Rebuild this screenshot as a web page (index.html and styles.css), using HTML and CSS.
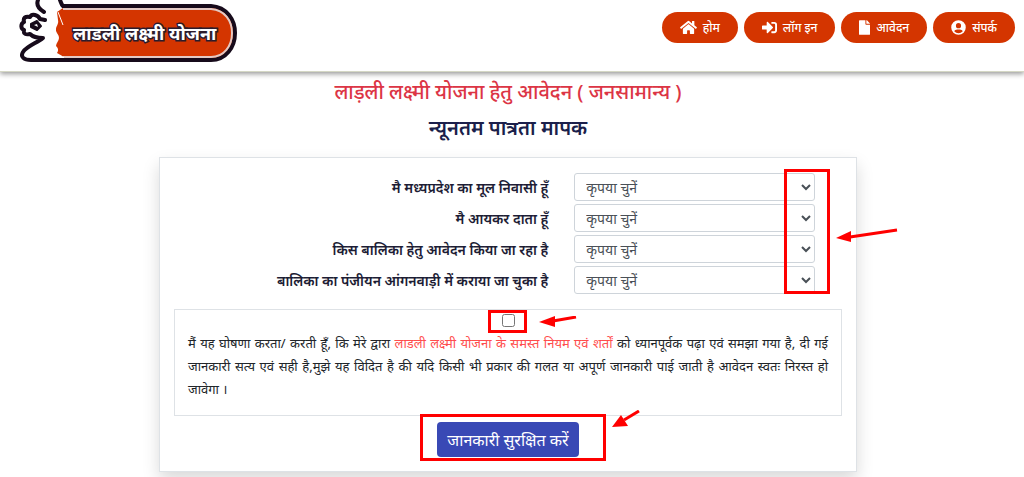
FILE: index.html
```html
<!DOCTYPE html>
<html lang="hi">
<head>
    <meta charset="UTF-8">
    <meta name="viewport" content="width=device-width, initial-scale=1.0">
    <title>लाडली लक्ष्मी योजना</title>
    <link rel="stylesheet" href="styles.css">
</head>
<body>
    <header class="header">
        <a class="logo" href="#">
            <svg width="222" height="65" viewBox="0 0 222 65">
                <path d="M39 10L45 6H194C210 7 218 20 218 33C218 47 209 59 194 59H45L39 55Z" fill="#d43500"/>
                <path d="M45 6H194C210 7 218 20 218 33C218 47 209 60 194 60H45" fill="none" stroke="#170b1b" stroke-width="4"/>
                <path d="M46 9H194C208 10 215 21 215 33C215 46 207 57 194 57H46" fill="none" stroke="#e3c9c4" stroke-width="2"/>
                <path d="M21 0C19 5 22 9 27 12L28 20L23 19C21 15 15 13 13 17C8 16 6 18 7 22C3 24 4 29 7 30C6 34 9 35 13 34C16 37 21 38 26 38C20 43 10 46 6 52C3 57 7 60 14 60H47V57L40 53C42 50 41 48 39 46C39 43 42 41 42 38C42 34 38 32 39 29C39 26 42 24 41 20L40 12L46 8L43 0Z" fill="#fff"/>
                <path d="M21 0C19 5 22 9 27 12M28 20L23 19C21 15 15 13 13 17C8 16 6 18 7 22C3 24 4 29 7 30C6 34 9 35 13 34C16 37 21 38 26 38C20 43 10 46 6 52C3 57 7 60 14 60H50M46 6C44 4 44 2 43 0" fill="none" stroke="#170b1b" stroke-width="4" stroke-linejoin="round" stroke-linecap="round"/>
                <path d="M14 24L20 21L24 26L20 30L14 27Z" fill="#170b1b" stroke="#170b1b" stroke-width="2" stroke-linejoin="round"/>
                <path d="M17 25L20 24L21 27Z" fill="#fff"/>
                <path d="M41 12L46 25" stroke="#fff" stroke-width="1"/>
                <text class="logo-text" x="56" y="40">लाडली लक्ष्मी योजना</text>
            </svg>
        </a>
        <nav class="nav">
            <a class="nav-link" href="#">
                <svg width="17" height="15" viewBox="0 0 576 512"><path fill="currentColor" d="M280 148L96 300v164a16 16 0 0 0 16 16l112-1a16 16 0 0 0 16-16v-95a16 16 0 0 1 16-16h64a16 16 0 0 1 16 16v95a16 16 0 0 0 16 16h112a16 16 0 0 0 16-16V300L296 148a12 12 0 0 0-16 0zM572 251l-84-69V44a12 12 0 0 0-12-12h-56a12 12 0 0 0-12 12v72l-90-74a48 48 0 0 0-61 0L4 251a12 12 0 0 0-2 17l26 31a12 12 0 0 0 17 2L280 107a12 12 0 0 1 16 0l235 194a12 12 0 0 0 17-2l25-31a12 12 0 0 0-1-17z"/></svg>
                होम
            </a>
            <a class="nav-link" href="#">
                <svg width="15" height="15" viewBox="0 0 512 512"><path fill="currentColor" d="M416 448h-84a12 12 0 0 1-12-12v-40a12 12 0 0 1 12-12h84a32 32 0 0 0 32-32V160a32 32 0 0 0-32-32h-84a12 12 0 0 1-12-12V76a12 12 0 0 1 12-12h84a96 96 0 0 1 96 96v192a96 96 0 0 1-96 96zm-47-209L201 71c-15-15-41-5-41 17v96H24a24 24 0 0 0-24 24v96a24 24 0 0 0 24 24h136v96c0 22 26 32 41 17l168-168a24 24 0 0 0 0-34z"/></svg>
                लॉग इन
            </a>
            <a class="nav-link" href="#">
                <svg width="11" height="15" viewBox="0 0 384 512"><path fill="currentColor" d="M224 136V0H24A24 24 0 0 0 0 24v464a24 24 0 0 0 24 24h336a24 24 0 0 0 24-24V160H248a24 24 0 0 1-24-24zm160-14v6H256V0h6a24 24 0 0 1 17 7l98 98a24 24 0 0 1 7 17z"/></svg>
                आवेदन
            </a>
            <a class="nav-link" href="#">
                <svg width="15" height="15" viewBox="0 0 496 512"><path fill="currentColor" d="M248 8a248 248 0 1 0 0 496 248 248 0 0 0 0-496zm0 96a88 88 0 1 1 0 176 88 88 0 0 1 0-176zm0 344a192 192 0 0 1-146-68c19-35 56-60 99-60 15 0 24 8 47 8s32-8 47-8c43 0 80 25 99 60a192 192 0 0 1-146 68z"/></svg>
                संपर्क
            </a>
        </nav>
    </header>

    <main class="main">
        <h1 class="title">लाड़ली लक्ष्मी योजना हेतु आवेदन ( जनसामान्य )</h1>
        <h2 class="subtitle">न्यूनतम पात्रता मापक</h2>

        <form class="card">
            <div class="fields">
                <label for="resident">मै मध्यप्रदेश का मूल निवासी हूँ</label>
                <select id="resident"><option>कृपया चुनें</option></select>
                <label for="taxpayer">मै आयकर दाता हूँ</label>
                <select id="taxpayer"><option>कृपया चुनें</option></select>
                <label for="girl">किस बालिका हेतु आवेदन किया जा रहा है</label>
                <select id="girl"><option>कृपया चुनें</option></select>
                <label for="anganwadi">बालिका का पंजीयन आंगनवाड़ी में कराया जा चुका है</label>
                <select id="anganwadi"><option>कृपया चुनें</option></select>
                <span class="mark mark-selects"></span>
                <svg class="arrow arrow-selects" width="62" height="14" viewBox="0 0 62 14"><path d="M61 2L14 9" stroke="#f00" stroke-width="3"/><path d="M0 10L15 3V14Z" fill="#f00"/></svg>
            </div>

            <div class="declaration">
                <div class="agree">
                    <input type="checkbox" id="agree">
                    <span class="mark mark-agree"></span>
                    <svg class="arrow arrow-agree" width="38" height="12" viewBox="0 0 38 12"><path d="M37 1L14 5" stroke="#f00" stroke-width="3"/><path d="M0 6L16 0V11Z" fill="#f00"/></svg>
                </div>
                <label for="agree">मैं यह घोषणा करता/ करती हूँ, कि मेरे द्वारा <a href="#">लाडली लक्ष्मी योजना के समस्त नियम एवं शर्तों</a> को ध्यानपूर्वक पढ़ा एवं समझा गया है, दी गई जानकारी सत्य एवं सही है,मुझे यह विदित है की यदि किसी भी प्रकार की गलत या अपूर्ण जानकारी पाई जाती है आवेदन स्वतः निरस्त हो जावेगा ।</label>
            </div>

            <div class="actions">
                <button type="submit">जानकारी सुरक्षित करें</button>
                <span class="mark mark-submit"></span>
                <svg class="arrow arrow-submit" width="28" height="18" viewBox="0 0 28 18"><path d="M27 1L12 10" stroke="#f00" stroke-width="3"/><path d="M0 17L9 5L16 16Z" fill="#f00"/></svg>
            </div>
        </form>
    </main>
</body>
</html>
```

FILE: styles.css
```css
* {
    box-sizing: border-box;
}

body {
    margin: 0;
    font-family: "Noto Sans", "Noto Sans Devanagari", sans-serif;
    font-size: 14px;
    color: #212529;
    background-color: #fff;
}

.header {
    display: flex;
    justify-content: space-between;
    align-items: flex-start;
    height: 72px;
    padding: 0 9px 0 17px;
    border-bottom: 1px solid #d5d8c5;
    box-shadow: 0 2px 5px rgba(0, 0, 0, 0.4);
}

.logo svg {
    display: block;
}

.logo-text {
    font-size: 18px;
    font-weight: bold;
    fill: #fff;
    stroke: #2b1c2c;
    stroke-width: 3px;
    paint-order: stroke;
}

.nav {
    display: flex;
    gap: 6px;
    padding-top: 12px;
}

.nav-link {
    display: flex;
    align-items: center;
    gap: 6px;
    height: 31px;
    padding: 0 18px;
    border-radius: 16px;
    background-color: #d43500;
    color: #fff;
    font-size: 12px;
    font-weight: 500;
    text-decoration: none;
    white-space: nowrap;
}

.main {
    padding: 6px 167px 5px 159px;
}

.title,
.subtitle {
    margin: 0;
    font-size: 20px;
    line-height: 28px;
    font-weight: 500;
    text-align: center;
    white-space: nowrap;
}

.title {
    color: #dc3545;
}

.subtitle {
    margin-top: 8px;
    color: #1b1f4b;
    font-weight: 600;
}

.card {
    margin-top: 15px;
    padding: 15px 14px 14px;
    border: 1px solid #dee2e6;
    background-color: #fff;
    box-shadow: 0 8px 16px rgba(0, 0, 0, 0.15);
}

.fields {
    position: relative;
    display: grid;
    grid-template-columns: 14fr 9fr;
    gap: 3px 26px;
    align-items: center;
    padding-right: 27px;
}

.fields label {
    font-weight: 600;
    text-align: right;
    color: #1d1d35;
}

.fields select {
    width: 100%;
    height: 28px;
    padding: 0 7px;
    border: 1px solid #ced4da;
    border-radius: 3px;
    background-color: #fff;
    color: #495057;
    font-family: inherit;
    font-size: 14px;
}

.declaration {
    height: 107px;
    margin-top: 15px;
    padding: 4px 13px;
    border: 1px solid #dee2e6;
    font-size: 13px;
    line-height: 23px;
    text-align: justify;
}

.declaration a {
    color: #ff4d4d;
    text-decoration: none;
}

.agree {
    position: relative;
    width: 13px;
    height: 18px;
    margin: 0 auto;
}

.agree input {
    display: block;
    width: 13px;
    height: 13px;
    margin: 0;
}

.actions {
    position: relative;
    width: max-content;
    margin: 6px auto 0;
}

.actions button {
    display: block;
    height: 35px;
    padding: 0 10px;
    border: 0;
    border-radius: 4px;
    background-color: #3949b5;
    color: #fff;
    font-family: inherit;
    font-size: 16px;
}

/* red highlights over the controls */
.mark {
    position: absolute;
    border: 3px solid #f00;
    pointer-events: none;
}

.mark-selects {
    top: -4px;
    right: 12px;
    width: 46px;
    height: 125px;
}

.mark-agree {
    top: -4px;
    left: -14px;
    width: 39px;
    height: 23px;
}

.mark-submit {
    top: -8px;
    left: -17px;
    width: 186px;
    height: 47px;
}

.arrow {
    position: absolute;
}

.arrow-selects {
    top: 55px;
    right: -56px;
}

.arrow-agree {
    top: 2px;
    left: 37px;
}

.arrow-submit {
    top: -12px;
    left: 175px;
}
```
